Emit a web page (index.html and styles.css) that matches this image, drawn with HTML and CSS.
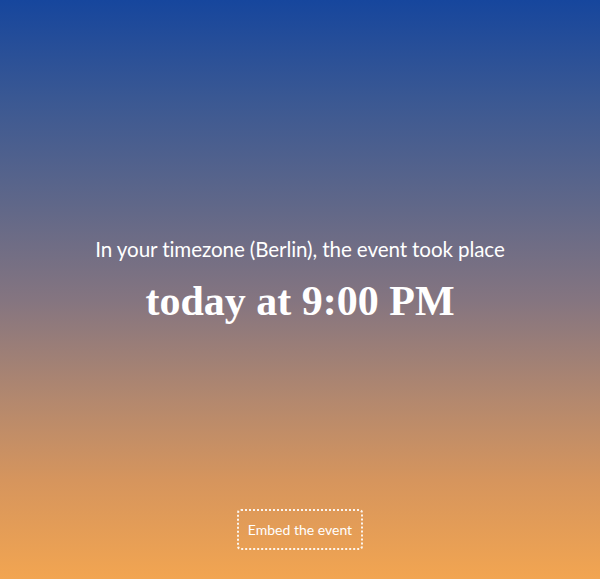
FILE: index.html
```html
<!DOCTYPE html>
<html>
<head>
<meta charset="utf-8">
<link rel="stylesheet" href="styles.css">
</head>
<body>
<main class="page">
  <section class="center">
    <p class="lead">In your timezone (Berlin), the event took place</p>
    <h1 class="time">today at 9:00 PM</h1>
  </section>
  <footer class="foot">
    <button class="embed">Embed the event</button>
  </footer>
</main>
</body>
</html>
```
FILE: styles.css
```css
html, body {
  margin: 0;
  padding: 0;
  height: 100%;
}
body {
  background: linear-gradient(180deg, #16469d 0%, #3a5893 17%, #5f6789 35%, #857580 52%, #b3886e 69%, #d6955d 83%, #f2a551 100%);
  color: #fff;
  font-family: "Lato", "Open Sans", sans-serif;
}
.page {
  height: 579px;
  display: flex;
  flex-direction: column;
  align-items: center;
}
.center {
  flex: 1;
  display: flex;
  flex-direction: column;
  align-items: center;
  justify-content: flex-end;
  padding-bottom: 184px;
}
.lead {
  margin: 0;
  font-size: 20.6px;
  letter-spacing: -0.1px;
}
.time {
  margin: 16px 0 0;
  font-family: "Liberation Serif", serif;
  font-weight: bold;
  font-size: 42px;
}
.foot {
  padding-bottom: 29px;
}
.embed {
  font-family: "Lato", sans-serif;
  font-size: 14px;
  color: #fff;
  background: transparent;
  border: 2px dotted rgba(255,255,255,0.9);
  border-radius: 4px;
  padding: 10px 9px;
}
```
